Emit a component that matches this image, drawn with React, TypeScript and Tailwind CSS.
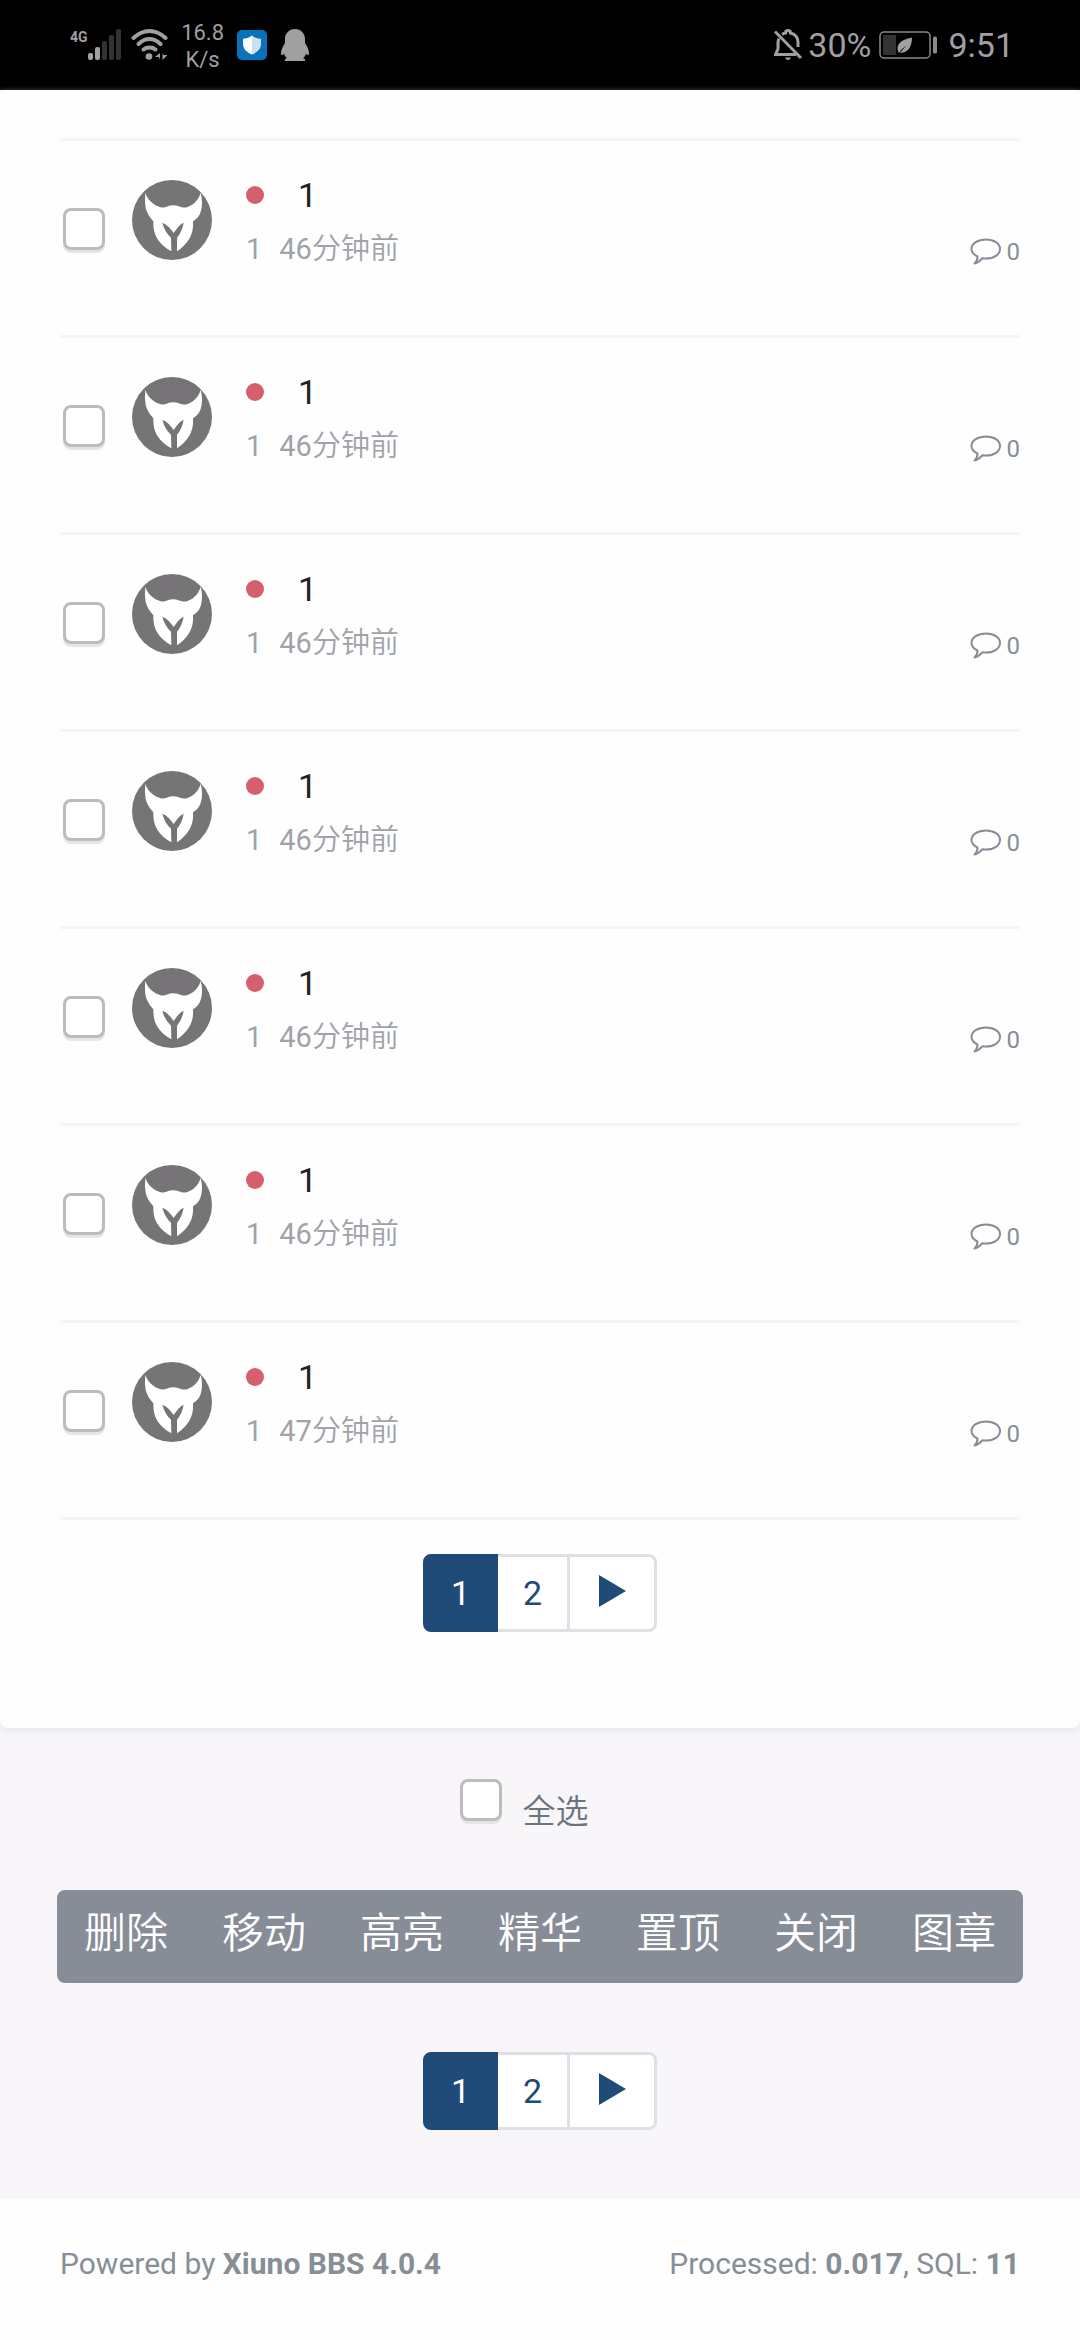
import { useState } from 'react';

interface Thread {
    id: number,
    title: string,
    author: string,
    minutes: number,
    replies: number,
}

const threads: Thread[] = [
    { id: 1, title: '1', author: '1', minutes: 46, replies: 0 },
    { id: 2, title: '1', author: '1', minutes: 46, replies: 0 },
    { id: 3, title: '1', author: '1', minutes: 46, replies: 0 },
    { id: 4, title: '1', author: '1', minutes: 46, replies: 0 },
    { id: 5, title: '1', author: '1', minutes: 46, replies: 0 },
    { id: 6, title: '1', author: '1', minutes: 46, replies: 0 },
    { id: 7, title: '1', author: '1', minutes: 47, replies: 0 },
];

const actions = ['删除', '移动', '高亮', '精华', '置顶', '关闭', '图章'];

const checkboxClass = "block size-[42px] shrink-0 appearance-none rounded-lg border-[3px] border-[#bdbbbe] bg-white shadow-[0_3px_0_#e6e4e7] checked:bg-[#204a77]";

const SignalIcon = () => (
    <svg className="h-8 w-[34px]" viewBox="0 0 34 32" aria-hidden="true">
        <rect x="0" y="24" width="5" height="7" rx="2" fill="#a09fa1" />
        <rect x="7" y="18" width="5" height="13" rx="2" fill="#a09fa1" />
        <rect x="14" y="12" width="5" height="19" rx="2" fill="#343235" />
        <rect x="21" y="6" width="5" height="25" rx="2" fill="#343235" />
        <rect x="28" y="0" width="5" height="31" rx="2" fill="#343235" />
    </svg>
);

const WifiIcon = () => (
    <svg className="h-8 w-[38px]" viewBox="0 0 38 32" aria-hidden="true">
        <g fill="none" stroke="#a09fa1" strokeWidth="4" strokeLinecap="round">
            <path d="M2.500 9Q10 2 18.500 2T34.500 9" />
            <path d="M7.500 15Q12.500 10 18.500 10T29.500 15" />
            <path d="M12.500 20.500Q15 18.500 18.500 18.500T24.500 20.500" />
        </g>
        <circle cx="18" cy="27.500" r="3.300" fill="#a09fa1" />
        <path d="M29 24v7l-1-3h-4zM31.500 24v7l5-5h-4z" fill="#a09fa1" />
    </svg>
);

const ShieldIcon = () => (
    <svg className="size-[30px]" viewBox="0 0 30 30" aria-hidden="true">
        <rect width="30" height="30" rx="5" fill="#0972bd" />
        <path d="M15 5.500C12 8 9 8.500 6 8.700V14c0 5 4 8.500 9 10.500z" fill="#fff" />
        <path d="M15 5.500c3 2.500 6 3 9 3.200V14c0 5-4 8.500-9 10.500z" fill="#cde0f1" />
    </svg>
);

const PenguinIcon = () => (
    <svg className="h-8 w-7" viewBox="0 0 28 32" aria-hidden="true">
        <path d="M14 0C8 0 4 4.500 4 10v4C2 17 0 21 0 24.500c0 2 1.500 2 3 0 .5 2 1.500 3.500 3 4.500-2 .5-2.500 1.500-2 3h20c.5-1.500 0-2.500-2-3 1.500-1 2.500-2.500 3-4.500 1.500 2 3 2 3 0C28 21 26 17 24 14v-4C24 4.500 20 0 14 0z" fill="#a09fa1" />
    </svg>
);

const BellOffIcon = () => (
    <svg className="h-8 w-7" viewBox="0 0 28 32" aria-hidden="true">
        <g fill="none" stroke="#a09fa1" strokeWidth="3">
            <path d="M1 2.500L27 29" />
            <path d="M5 9.500Q4 12 4 14v6L1.500 25.500H22" />
            <path d="M8 5.500Q10 4 11.500 4 11.500 1.500 14 1.500T16.500 4Q24 6 24 13v5" />
        </g>
        <path d="M11 28.500h6q-1 2.500-3 2.500t-3-2.500z" fill="#a09fa1" />
    </svg>
);

const BatteryIcon = () => (
    <svg className="h-7 w-[59px]" viewBox="0 0 59 28" aria-hidden="true">
        <rect x="1" y="1" width="50" height="26" rx="4" fill="none" stroke="#8b8a8c" strokeWidth="1.500" />
        <rect x="4" y="4" width="13" height="20" rx="1" fill="#343235" />
        <rect x="54" y="5.500" width="4" height="17" rx="1.500" fill="#8b8a8c" />
        <path d="M33 6.500C25 8 19 11 18.500 17q0 3 1.500 5Q23 17 28 14.500 23.500 18 21 22c7 0 12-5 12-15.500z" fill="#a09fa1" />
    </svg>
);

const StatusBar = () => (
    <header className="flex h-[90px] items-center bg-black pl-[70px] pr-[66px] text-[#a09fa1]">
        <div className="flex items-start">
            <span className="text-[14px] font-bold leading-4">4G</span>
            <SignalIcon />
        </div>
        <div className="ml-[9px]"><WifiIcon /></div>
        <div className="ml-3 w-11 pt-0.5 text-center text-[22px] leading-[27px]">
            <div>16.8</div>
            <div>K/s</div>
        </div>
        <div className="ml-3"><ShieldIcon /></div>
        <div className="ml-3.5"><PenguinIcon /></div>
        <div className="ml-auto"><BellOffIcon /></div>
        <span className="ml-1.5 text-[34px] leading-10">30%</span>
        <div className="ml-2"><BatteryIcon /></div>
        <span className="ml-2.5 text-[34px] leading-10">9:51</span>
    </header>
);

const Avatar = () => (
    <svg className="size-20" viewBox="0 0 240 240" aria-hidden="true">
        <circle cx="120" cy="120" r="120" fill="#767477" />
        <path d="M40 38C46 58 62 72 78 79Q88 84 98 82C106 80 112 76 123 76C136 76 142 80 150 82Q160 84 168 80C188 72 200 58 206 38C211 56 212 78 206 96Q200 114 183 124C184 144 182 158 172 176C162 192 150 204 135 214L135 173Q150 156 155 128C142 134 134 146 125 159C116 146 106 134 91 128Q98 156 117 173L118 214C100 204 86 192 76 176C66 160 64 144 64 124Q46 104 41 84Q37 64 40 38Z" fill="#fff" />
    </svg>
);

const CommentIcon = () => (
    <svg className="h-7 w-8" viewBox="0 0 32 28" fill="none" stroke="#868e96" strokeWidth="2" strokeLinejoin="round" aria-hidden="true">
        <path d="M7.500 18.500C3.500 16.500 1.500 14 1.500 11 1.500 5.500 8 1.500 16 1.500S30 5.500 30 11s-6 9.500-14 9.500q-2 0-3.500-.3Q9 24.500 4.500 25.500 7.500 23 7.500 18.500z" />
    </svg>
);

const ThreadRow = ({ thread }: { thread: Thread }) => (
    <li className="flex items-start border-t-[3px] border-[#f5f4f6] pb-[59px] pl-[3px] pt-[30px]">
        <input type="checkbox" aria-label={thread.title} className={`${checkboxClass} mt-[37px]`} />
        <a href="#" aria-label={thread.author} className="ml-[27px] mt-[9px] shrink-0"><Avatar /></a>
        <div className="ml-[34px] grow">
            <div className="flex items-center text-[34px] leading-[48px] text-[#212226]">
                <span className="size-[18px] rounded-full bg-[#d55f6d]" />
                <a href="#" className="ml-[34px]">{thread.title}</a>
            </div>
            <div className="mt-1.5 flex justify-between text-[29px] leading-[48px] text-[#9fa3a9]">
                <div className="flex gap-[17px]">
                    <a href="#">{thread.author}</a>
                    <span>{thread.minutes}<span className="font-[350]">分钟前</span></span>
                </div>
                <div className="flex items-center gap-[5px] pt-[3px] text-[24px] text-[#868e96]">
                    <CommentIcon />
                    <span>{thread.replies}</span>
                </div>
            </div>
        </div>
    </li>
);

const Pagination = () => (
    <nav className="flex justify-center text-[34px] leading-[72px] text-[#204a77]">
        <a href="#" className="rounded-l-lg border-[3px] border-[#204a77] bg-[#204a77] px-[25px] text-white">1</a>
        <a href="#" className="border-y-[3px] border-[#e0dfe5] bg-white px-[25px]">2</a>
        <a href="#" aria-label="下一页" className="flex items-center rounded-r-lg border-[3px] border-[#e0dfe5] bg-white pb-1 pl-[29px] pr-7">
            <svg className="h-8 w-[27px]" viewBox="0 0 27 32" aria-hidden="true">
                <path d="M0 0L27 16L0 32Z" fill="#204a77" />
            </svg>
        </a>
    </nav>
);

const Footer = () => (
    <footer className="flex grow items-start justify-between bg-[#fefefe] px-[60px] pt-[45px] text-[30px] leading-10 text-[#868e96]">
        <div>Powered by <b className="font-bold">Xiuno BBS 4.0.4</b></div>
        <div>Processed: <b className="font-bold">0.017</b>, SQL: <b className="font-bold">11</b></div>
    </footer>
);

const App = () => {
    const [allChecked, setAllChecked] = useState(false);

    return (
        <div className="flex min-h-screen flex-col bg-[#f8f6f9] font-['Roboto','Noto_Sans_CJK_SC',sans-serif]">
            <StatusBar />
            <main className="rounded-b-lg bg-[#fefefe] px-[60px] pb-24 pt-12 shadow-[0_3px_6px_#e9e7ea]">
                <ul className="border-b-[3px] border-[#f5f4f6]">
                    {threads.map(thread => <ThreadRow key={thread.id} thread={thread} />)}
                </ul>
                <div className="mt-[34px]"><Pagination /></div>
            </main>
            <section className="px-[57px] pb-[69px] pt-[51px]">
                <div className="flex items-start justify-center gap-[21px] pr-8">
                    <input
                        id="check-all"
                        type="checkbox"
                        checked={allChecked}
                        onChange={e => setAllChecked(e.target.checked)}
                        className={checkboxClass}
                    />
                    <label htmlFor="check-all" className="pt-3 text-[33px] font-[350] leading-[42px] text-[#6c7480]">全选</label>
                </div>
                <div className="mt-[57px] flex overflow-hidden rounded-lg bg-[#868d96]">
                    {actions.map(action => (
                        <button key={action} type="button" className="flex-1 pb-1.5 text-[42px] font-[350] leading-[87px] text-white">{action}</button>
                    ))}
                </div>
                <div className="mt-[69px]"><Pagination /></div>
            </section>
            <Footer />
        </div>
    );
};

export default App;
